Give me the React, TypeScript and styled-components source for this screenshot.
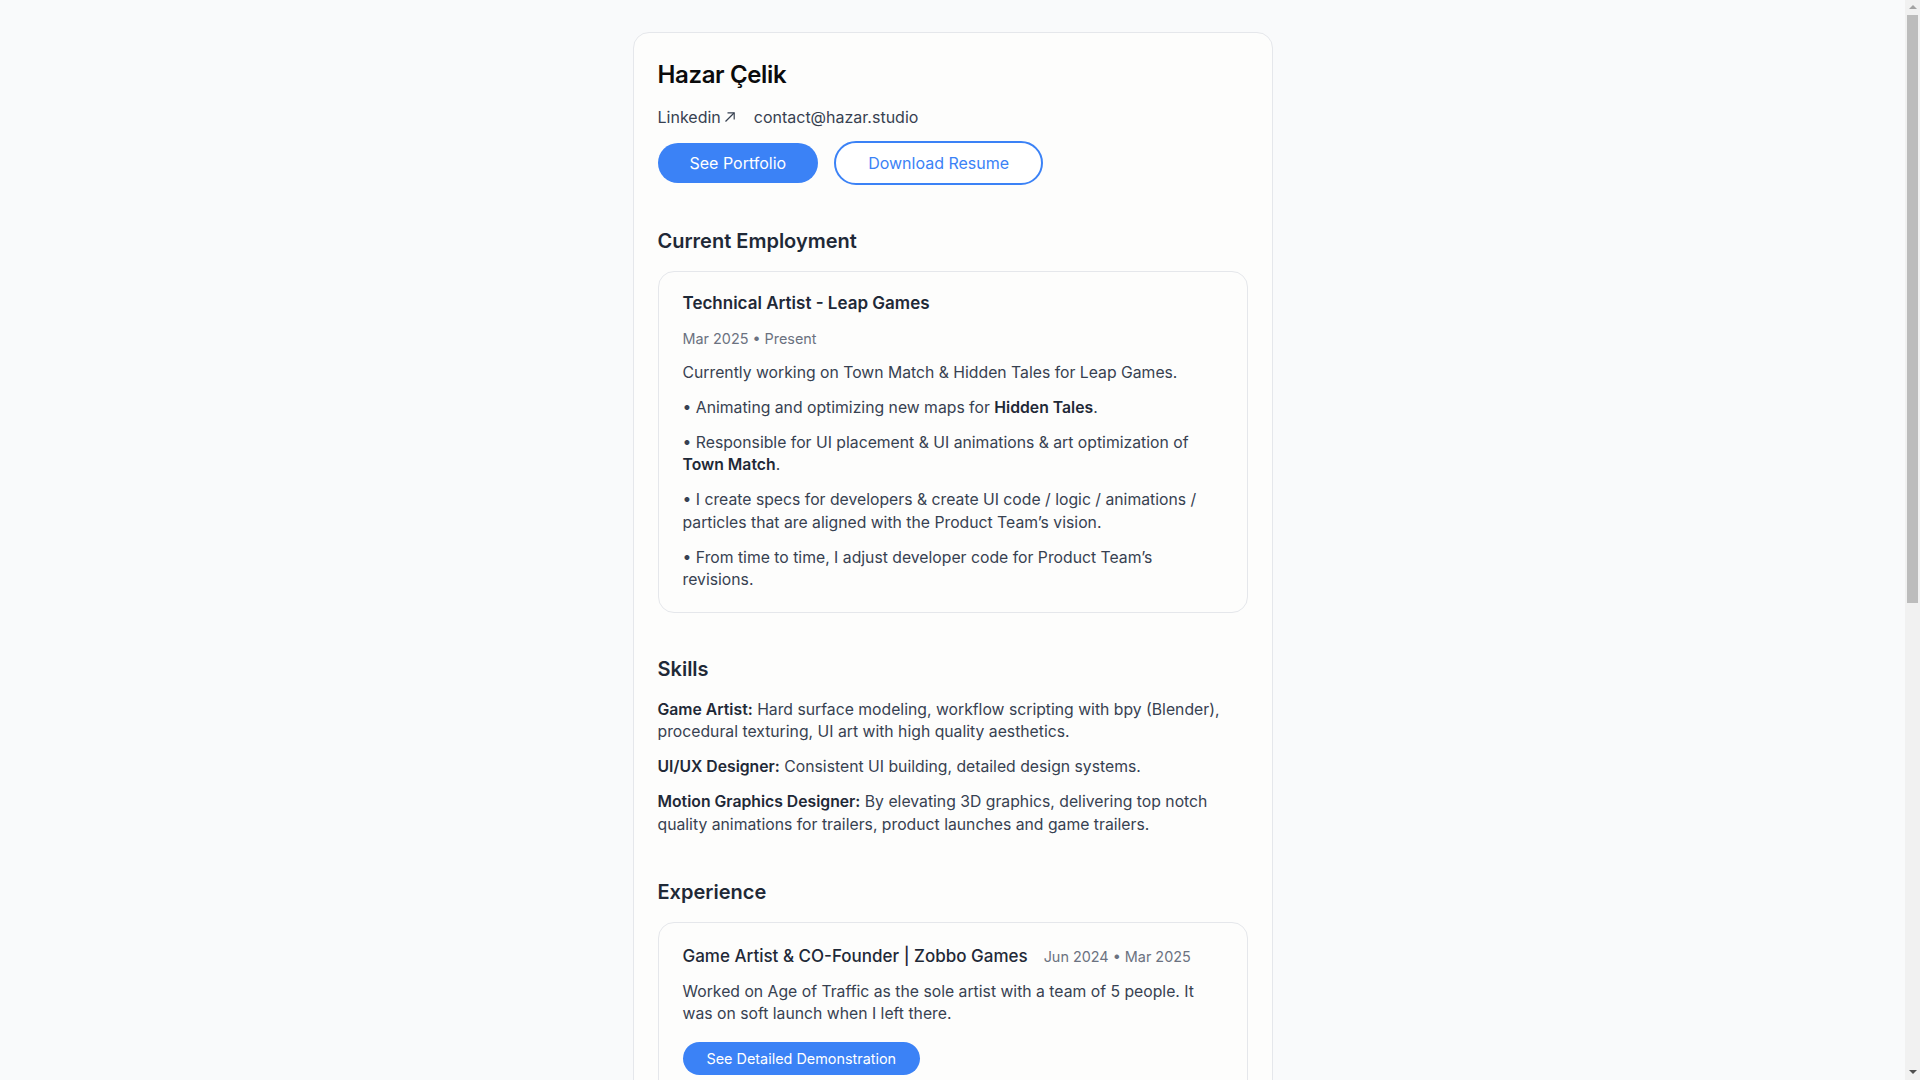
import React from 'react';
import styled, { createGlobalStyle } from 'styled-components';

const GlobalStyle = createGlobalStyle`
    * {
        box-sizing: border-box;
    }
    body {
        margin: 0;
        background: #f9fafb;
        font-family: Inter, 'Noto Sans', sans-serif;
        color: #374151;
    }
`;

/* The reference was taken with a classic 15px scrollbar; the page is laid out beside it */
const ScrollRail = styled.div`
    position: fixed;
    top: 0;
    right: 0;
    width: 15px;
    height: 100vh;
    background: #f1f1f1;
    display: flex;
    flex-direction: column;
    align-items: center;
`;

const RailArrow = styled.span<{ $down?: boolean }>`
    width: 0;
    height: 0;
    margin: ${({ $down }) => ($down ? 'auto 0 6px' : '5px 0 0')};
    border-left: 4px solid transparent;
    border-right: 4px solid transparent;
    ${({ $down }) => ($down ? 'border-top: 4px solid #505050;' : 'border-bottom: 4px solid #a3a3a3;')}
`;

const RailThumb = styled.span`
    position: absolute;
    top: 15px;
    left: 2px;
    right: 2px;
    height: 588px;
    background: #bcbcbc;
`;

const Page = styled.main`
    padding: 32px 16px;
    margin-right: 15px;
`;

const Sheet = styled.div`
    max-width: 640px;
    margin: 0 auto;
    background: #fdfdfc;
    border: 1px solid #e5e7eb;
    border-radius: 16px;
    padding: 24px 24px 32px;
`;

const Name = styled.h1`
    margin: 0;
    font-size: 24px;
    line-height: 36px;
    font-weight: 600;
    color: #0b0b0c;
    letter-spacing: -0.015em;
`;

const LinkRow = styled.div`
    display: flex;
    align-items: center;
    gap: 18px;
    margin-top: 12px;
    font-size: 16px;
    line-height: 24px;
`;

const TextLink = styled.a`
    display: inline-flex;
    align-items: center;
    gap: 3px;
    color: #374151;
    text-decoration: none;
`;

const ButtonRow = styled.div`
    display: flex;
    align-items: center;
    gap: 16px;
    margin-top: 12px;
`;

const PillButton = styled.button<{ $variant?: 'solid' | 'outline'; $size?: 'md' | 'sm' }>`
    font-family: inherit;
    font-size: ${({ $size }) => ($size === 'sm' ? '14.4px' : '16px')};
    line-height: ${({ $size }) => ($size === 'sm' ? '21px' : '24px')};
    padding: ${({ $size }) => ($size === 'sm' ? '6px 24px' : '8px 32px')};
    border-radius: 999px;
    cursor: pointer;
    border: ${({ $variant }) => ($variant === 'outline' ? '2px solid #3b82f6' : '0')};
    background: ${({ $variant }) => ($variant === 'outline' ? '#ffffff' : '#3b82f6')};
    color: ${({ $variant }) => ($variant === 'outline' ? '#3b82f6' : '#ffffff')};
`;

const Section = styled.section`
    margin-top: 42px;
`;

const SectionTitle = styled.h2`
    margin: 0 0 16px;
    font-size: 20px;
    line-height: 28px;
    font-weight: 600;
    color: #1f2937;
`;

const JobCard = styled.div<{ $top?: number }>`
    border: 1px solid #e5e7eb;
    border-radius: 16px;
    padding: ${({ $top }) => $top ?? 19}px 24px 20px;

    & + & {
        margin-top: 16px;
    }
`;

const JobTitle = styled.h3<{ $weight?: number }>`
    margin: 0;
    font-size: 17px;
    line-height: 24px;
    font-weight: ${({ $weight }) => $weight ?? 600};
    color: #1f2937;
`;

const JobHead = styled.div`
    display: flex;
    align-items: baseline;
    flex-wrap: wrap;
    column-gap: 16px;
`;

const Dates = styled.div<{ $inline?: boolean }>`
    margin-top: ${({ $inline }) => ($inline ? '0' : '14px')};
    font-size: 14.4px;
    line-height: 20px;
    color: #6b7280;
`;

const Para = styled.p`
    margin: 12.5px 0 0;
    font-size: 15.75px;
    line-height: 22.5px;
    color: #374151;

    b {
        font-weight: 600;
        color: #1f2937;
    }
`;

const SkillPara = styled(Para)`
    &:first-of-type {
        margin-top: 0;
    }
`;

const CardAction = styled.div`
    margin-top: 16px;
`;

const ExternalArrow = () => (
    <svg width="12" height="12" viewBox="0 0 12 12" fill="none" stroke="currentColor" strokeWidth="1.2">
        <path d="M1.5 10.5 L10 2" />
        <path d="M3.5 1.8 H10.2 V8.5" />
    </svg>
);

type Job = {
    title: string;
    dates: string;
    text: string[];
    action?: string;
};

const pastJobs: Job[] = [
    {
        title: 'Game Artist & CO-Founder | Zobbo Games',
        dates: 'Jun 2024 • Mar 2025',
        text: [
            'Worked on Age of Traffic as the sole artist with a team of 5 people. It was on soft launch when I left there.',
        ],
        action: 'See Detailed Demonstration',
    },
    {
        title: '3D Artist | Freelance',
        dates: 'Jan 2022 • Jun 2024',
        text: [
            'Hard surface models, product renders and motion graphics for clients from various industries.',
            'Built small Blender add-ons with bpy to speed up repetitive modeling and texturing tasks.',
        ],
    },
    {
        title: 'UI/UX Designer | Freelance',
        dates: 'Mar 2020 • Jan 2022',
        text: ['Designed interfaces and design systems for mobile games and web products.'],
        action: 'See Detailed Demonstration',
    },
];

export default function App() {
    return (
        <>
            <GlobalStyle />
            <Page>
                <Sheet>
                    <Name>Hazar Çelik</Name>
                    <LinkRow>
                        <TextLink href="#">
                            Linkedin
                            <ExternalArrow />
                        </TextLink>
                        <TextLink href="#">contact@hazar.studio</TextLink>
                    </LinkRow>
                    <ButtonRow>
                        <PillButton $variant="solid">See Portfolio</PillButton>
                        <PillButton $variant="outline">Download Resume</PillButton>
                    </ButtonRow>

                    <Section>
                        <SectionTitle>Current Employment</SectionTitle>
                        <JobCard>
                            <JobTitle>Technical Artist - Leap Games</JobTitle>
                            <Dates>Mar 2025 • Present</Dates>
                            <Para>Currently working on Town Match &amp; Hidden Tales for Leap Games.</Para>
                            <Para>
                                • Animating and optimizing new maps for <b>Hidden Tales</b>.
                            </Para>
                            <Para>
                                • Responsible for UI placement &amp; UI animations &amp; art optimization of{' '}
                                <b>Town Match</b>.
                            </Para>
                            <Para>
                                • I create specs for developers &amp; create UI code / logic / animations /
                                particles that are aligned with the Product Team’s vision.
                            </Para>
                            <Para>• From time to time, I adjust developer code for Product Team’s revisions.</Para>
                        </JobCard>
                    </Section>

                    <Section>
                        <SectionTitle>Skills</SectionTitle>
                        <SkillPara>
                            <b>Game Artist:</b> Hard surface modeling, workflow scripting with bpy (Blender),
                            procedural texturing, UI art with high quality aesthetics.
                        </SkillPara>
                        <SkillPara>
                            <b>UI/UX Designer:</b> Consistent UI building, detailed design systems.
                        </SkillPara>
                        <SkillPara>
                            <b>Motion Graphics Designer:</b> By elevating 3D graphics, delivering top notch
                            quality animations for trailers, product launches and game trailers.
                        </SkillPara>
                    </Section>

                    <Section>
                        <SectionTitle>Experience</SectionTitle>
                        {pastJobs.map((job) => (
                            <JobCard key={job.title} $top={21}>
                                <JobHead>
                                    <JobTitle $weight={500}>{job.title}</JobTitle>
                                    <Dates $inline>{job.dates}</Dates>
                                </JobHead>
                                {job.text.map((t) => (
                                    <Para key={t}>{t}</Para>
                                ))}
                                {job.action && (
                                    <CardAction>
                                        <PillButton $variant="solid" $size="sm">
                                            {job.action}
                                        </PillButton>
                                    </CardAction>
                                )}
                            </JobCard>
                        ))}
                    </Section>

                    <Section>
                        <SectionTitle>Education</SectionTitle>
                        <JobCard $top={21}>
                            <JobHead>
                                <JobTitle $weight={500}>Graphic Design</JobTitle>
                                <Dates $inline>2016 • 2020</Dates>
                            </JobHead>
                            <Para>Bachelor’s degree, focused on visual communication and motion design.</Para>
                        </JobCard>
                    </Section>
                </Sheet>
            </Page>
            <ScrollRail>
                <RailArrow />
                <RailThumb />
                <RailArrow $down />
            </ScrollRail>
        </>
    );
}
